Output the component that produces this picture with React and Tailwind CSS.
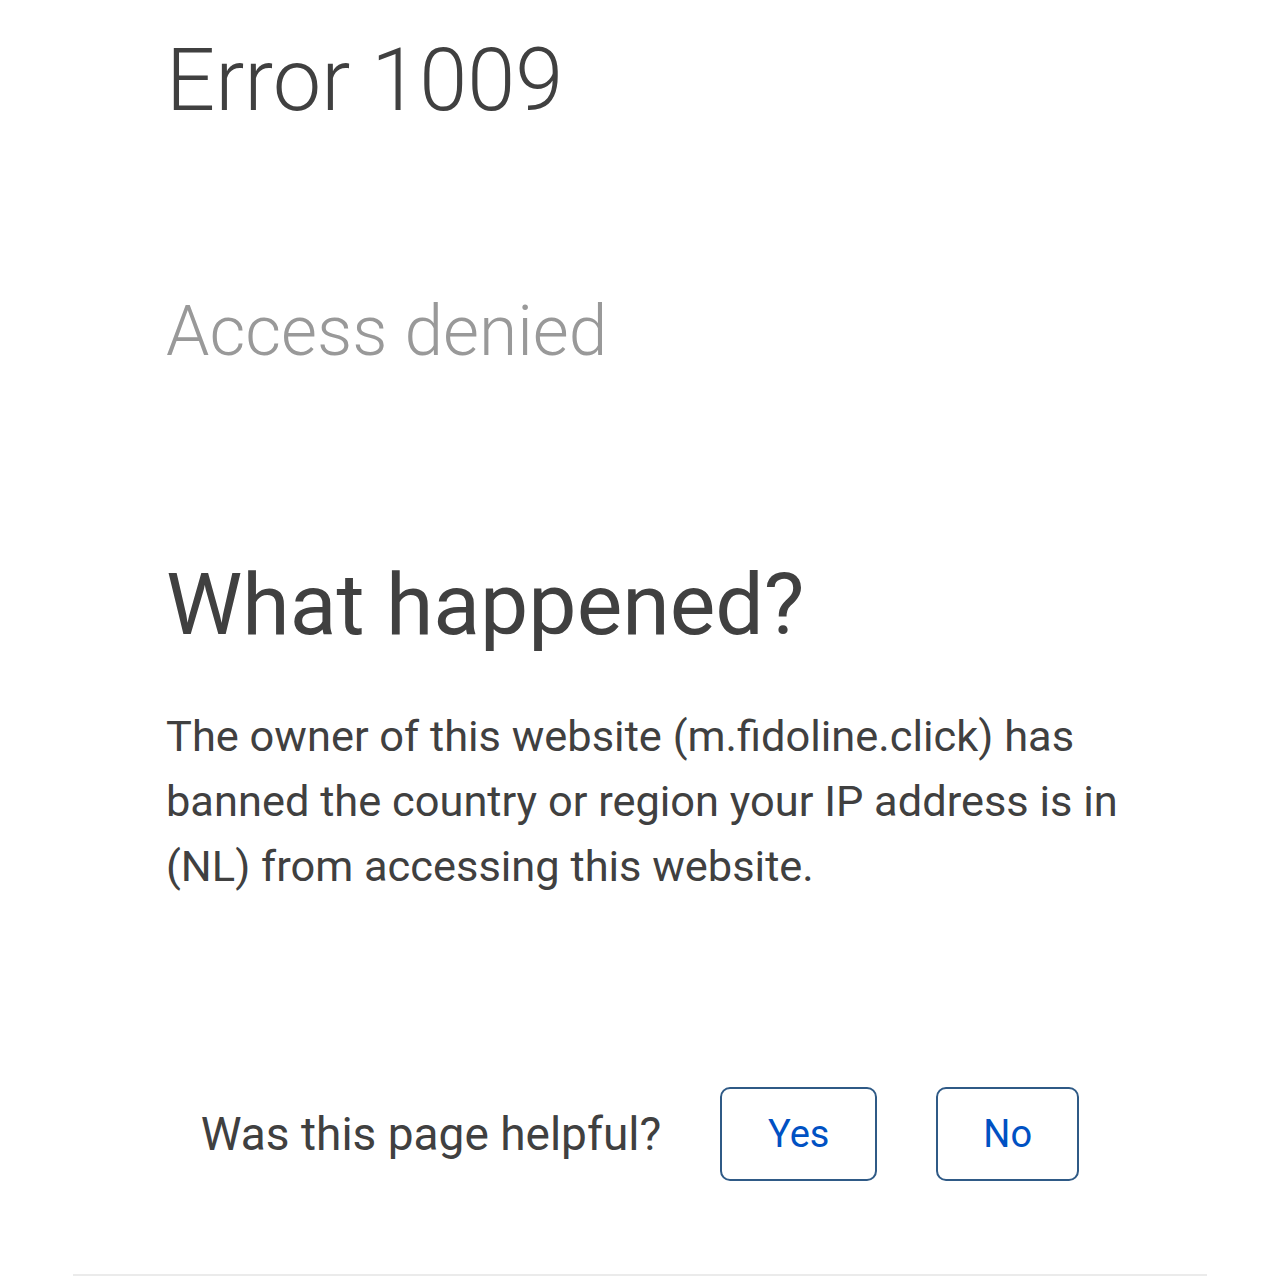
export default function App() {
  return (
    <div className="w-[1280px] h-[1280px] bg-white overflow-hidden" style={{ fontFamily: "Roboto, 'Noto Sans', sans-serif" }}>
      <div className="pl-[166px] pr-[114px]">
        <h1 className="text-[86.5px] leading-[1] font-light text-[#404040] pt-[38px]">Error 1009</h1>
        <h2 className="text-[69.5px] leading-[1] font-light text-[#999999] mt-[172px]">Access denied</h2>
        <h2 className="text-[86px] leading-[1] font-normal text-[#404040] mt-[196px]">What happened?</h2>
        <p className="text-[43.4px] leading-[65px] text-[#404040] mt-[56px]">
          The owner of this website (m.fidoline.click) has banned the country or region your IP address is in (NL) from accessing this website.
        </p>
      </div>
      <div className="flex items-center justify-center mt-[188px]">
        <span className="text-[46px] text-[#404040] mr-[59px]">Was this page helpful?</span>
        <button className="w-[157px] h-[94px] border-2 border-[#2f5a86] rounded-[10px] text-[38px] text-[#0051c3] mr-[59px]">Yes</button>
        <button className="w-[143px] h-[94px] border-2 border-[#2f5a86] rounded-[10px] text-[38px] text-[#0051c3]">No</button>
      </div>
      <div className="mx-[73px] mt-[93px] border-t-2 border-[#ebebeb]"></div>
    </div>
  );
}
